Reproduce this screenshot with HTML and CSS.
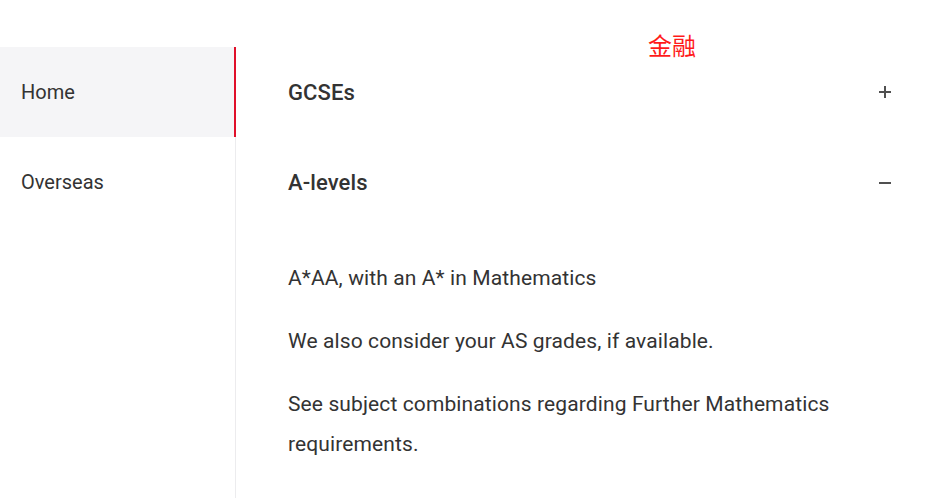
FILE: index.html
```html
<!DOCTYPE html>
<html lang="en">
<head>
<meta charset="utf-8">
<title>Entry requirements</title>
<link rel="stylesheet" href="styles.css">
</head>
<body>
<div class="tag">金融</div>
<div class="page">
  <nav class="side">
    <a class="side-item active" href="#">Home</a>
    <a class="side-item" href="#">Overseas</a>
  </nav>
  <main class="content">
    <div class="acc-row">
      <h3 class="acc-title">GCSEs</h3>
      <span class="icon plus"></span>
    </div>
    <div class="acc-row">
      <h3 class="acc-title">A-levels</h3>
      <span class="icon minus"></span>
    </div>
    <div class="acc-body">
      <p>A*AA, with an A* in Mathematics</p>
      <p>We also consider your AS grades, if available.</p>
      <p>See subject combinations regarding Further Mathematics requirements.</p>
    </div>
  </main>
</div>
</body>
</html>
```
FILE: styles.css
```css
html, body {
  margin: 0;
  padding: 0;
  background: #fff;
  font-family: Roboto, "Liberation Sans", Arial, sans-serif;
  color: #333;
}
.tag {
  position: absolute;
  left: 648px;
  top: 28px;
  font-family: "Noto Sans CJK SC", sans-serif;
  font-size: 24px;
  line-height: 34px;
  color: #ff1a1a;
}
.page {
  display: flex;
  padding-top: 47px;
  min-height: 451px;
}
.side {
  width: 235px;
  flex: none;
  border-right: 1px solid #ececee;
  display: flex;
  flex-direction: column;
}
.side-item {
  display: flex;
  align-items: center;
  height: 90px;
  padding-left: 21px;
  font-size: 20px;
  color: #333;
  text-decoration: none;
  margin-right: -1px;
}
.side-item.active {
  background: #f5f5f7;
  border-right: 2px solid #e0102a;
}
.content {
  flex: 1;
  padding: 0 54px 0 52px;
}
.acc-row {
  height: 90px;
  display: flex;
  align-items: center;
  justify-content: space-between;
}
.acc-row + .acc-row { height: 91px; }
.acc-title {
  margin: 0;
  font-size: 22px;
  font-weight: 500;
  color: #333;
  letter-spacing: 0.1px;
}
.icon {
  position: relative;
  width: 12px;
  height: 12px;
}
.icon::before, .icon::after {
  content: "";
  position: absolute;
  background: #505050;
}
.icon::before {
  left: 0;
  top: 5px;
  width: 12px;
  height: 2px;
}
.plus::after {
  left: 5px;
  top: 0;
  width: 2px;
  height: 12px;
}
.minus::after { display: none; }
.acc-body {
  padding-top: 30px;
}
.acc-body p {
  margin: 0 0 23px;
  font-size: 21px;
  line-height: 40px;
  letter-spacing: 0.11px;
}
```
